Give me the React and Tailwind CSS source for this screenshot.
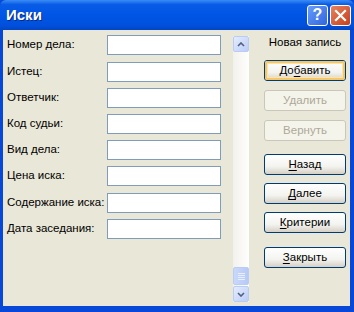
import React from "react";

const fields = [
  { label: "Номер дела:" },
  { label: "Истец:", extra: true },
  { label: "Ответчик:" },
  { label: "Код судьи:" },
  { label: "Вид дела:" },
  { label: "Цена иска:" },
  { label: "Содержание иска:", extra: true },
  { label: "Дата заседания:" },
];

const XpButton = ({ children, disabled, focused, className = "" }) => {
  if (disabled) {
    return (
      <div
        className={`h-[21px] w-[82px] flex items-center justify-center rounded-[3px] border border-[#c9c7ba] bg-[#f5f4ea] text-[#aca899] ${className}`}
      >
        {children}
      </div>
    );
  }
  return (
    <div
      className={`h-[21px] w-[82px] rounded-[3px] border border-[#003c74] bg-[linear-gradient(#ffffff,#f3f3ef_60%,#d6d0c5)] ${className}`}
    >
      <div
        className={`h-full w-full flex items-center justify-center rounded-[2px] text-black ${
          focused ? "border-2 border-[#f5c76a] shadow-[inset_0_0_0_1px_#fde4a6]" : ""
        }`}
      >
        {children}
      </div>
    </div>
  );
};

const U = ({ children }) => <span className="underline underline-offset-2">{children}</span>;

export default function App() {
  return (
    <div
      className="w-[354px] h-[312px] flex flex-col bg-[#0848d8] text-[11.5px] text-black"
      style={{ fontFamily: '"Liberation Sans", Arial, sans-serif' }}
    >
      {/* TITLE BAR */}
      <div className="h-[30px] flex items-center justify-between pl-[6px] pr-[3px] bg-[linear-gradient(#3a8cf5,#0a5ce6_15%,#0055e5_50%,#0050dc_85%,#0345c4)] rounded-t-[6px]">
        <span className="text-white font-bold text-[15px] [text-shadow:1px_1px_#0a2a80]">Иски</span>
        <div className="flex gap-[2px]">
          <div className="w-[21px] h-[21px] rounded-[3px] border border-white bg-[linear-gradient(135deg,#6a9cf8,#2f66e0)] flex items-center justify-center text-white font-bold text-[16px] leading-none">
            ?
          </div>
          <div className="w-[21px] h-[21px] rounded-[3px] border border-white bg-[linear-gradient(135deg,#e8825e,#c6401c)] flex items-center justify-center">
            <svg width="13" height="13" viewBox="0 0 13 13">
              <path d="M2 2 L11 11 M11 2 L2 11" stroke="white" strokeWidth="2.2" strokeLinecap="square" />
            </svg>
          </div>
        </div>
      </div>

      {/* BODY */}
      <div className="flex-1 ml-[3px] mr-[4px] mb-[6px] bg-[#e9e7d7] flex">
        {/* FIELDS */}
        <div className="pl-[4px] pt-[5px] flex flex-col gap-[6px]">
          {fields.map((f) => (
            <div key={f.label} className={`flex items-center h-[20px] ${f.extra ? "mt-px" : ""}`}>
              <span className="w-[100px] shrink-0 whitespace-nowrap">{f.label}</span>
              <div className="w-[114px] h-[20px] shrink-0 border border-[#7f9db9] bg-white" />
            </div>
          ))}
        </div>

        {/* SCROLLBAR */}
        <div className="ml-[12px] mt-[6px] mb-[4px] w-[16px] flex flex-col bg-[linear-gradient(90deg,#f3f1ec,#fefefe)]">
          <div className="h-[16px] rounded-[2px] border border-[#b9ccf5] bg-[linear-gradient(135deg,#e4ecfd,#bccdf7)] flex items-center justify-center">
            <svg width="8" height="5" viewBox="0 0 8 5">
              <path d="M1 4 L4 1 L7 4" stroke="#4d6185" strokeWidth="1.6" fill="none" />
            </svg>
          </div>
          <div className="flex-1" />
          <div className="h-[18px] rounded-[2px] border border-[#b9ccf5] bg-[linear-gradient(90deg,#c9d8fb,#b6c9f7)] flex flex-col items-center justify-center gap-[1px]">
            <div className="w-[7px] h-px bg-[#e8eefc]" />
            <div className="w-[7px] h-px bg-[#e8eefc]" />
            <div className="w-[7px] h-px bg-[#e8eefc]" />
            <div className="w-[7px] h-px bg-[#e8eefc]" />
          </div>
          <div className="h-[16px] mt-px rounded-[2px] border border-[#b9ccf5] bg-[linear-gradient(135deg,#e4ecfd,#bccdf7)] flex items-center justify-center">
            <svg width="8" height="5" viewBox="0 0 8 5">
              <path d="M1 1 L4 4 L7 1" stroke="#4d6185" strokeWidth="1.6" fill="none" />
            </svg>
          </div>
        </div>

        {/* BUTTONS */}
        <div className="ml-[15px] pt-[6px] flex flex-col">
          <div className="h-[14px] flex items-center justify-center">Новая запись</div>
          <XpButton focused className="mt-[10px]">
            До<U>б</U>авить
          </XpButton>
          <XpButton disabled className="mt-[9px]">Удалить</XpButton>
          <XpButton disabled className="mt-[9px]">Вернуть</XpButton>
          <XpButton className="mt-[13px]">
            <U>Н</U>азад
          </XpButton>
          <XpButton className="mt-[8px]">
            <U>Д</U>алее
          </XpButton>
          <XpButton className="mt-[8px]">
            <U>К</U>ритерии
          </XpButton>
          <XpButton className="mt-[14px]">
            <U>З</U>акрыть
          </XpButton>
        </div>
      </div>
    </div>
  );
}
